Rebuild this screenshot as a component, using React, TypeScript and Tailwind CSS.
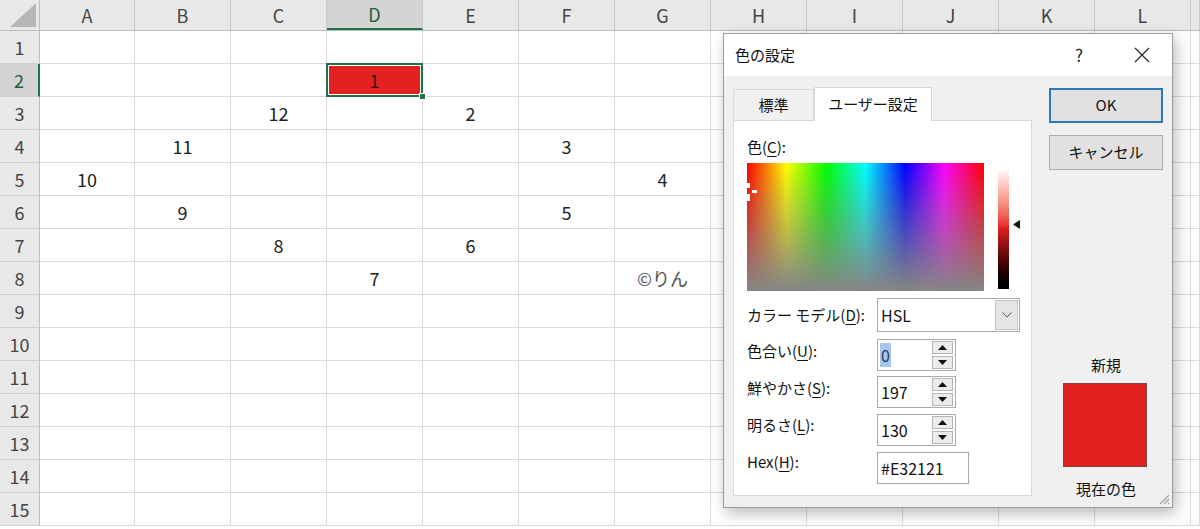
import type { ReactNode } from 'react'

const COLS = ['A', 'B', 'C', 'D', 'E', 'F', 'G', 'H', 'I', 'J', 'K', 'L', 'M']
const ROWS = Array.from({ length: 15 }, (_, i) => i + 1)

const VALUES: Record<string, string> = {
  D2: '1',
  C3: '12',
  E3: '2',
  B4: '11',
  F4: '3',
  A5: '10',
  G5: '4',
  B6: '9',
  F6: '5',
  C7: '8',
  E7: '6',
  D8: '7',
  G8: '©りん',
}

function colWidth(c: string) {
  if (c === 'A') return 'w-[95px] shrink-0'
  if (c === 'M') return 'flex-1'
  return 'w-[96px] shrink-0'
}

function Key({ children }: { children: ReactNode }) {
  return <span className="underline underline-offset-[3px]">{children}</span>
}

function SpinButtons() {
  return (
    <div className="mr-[2px] flex flex-col gap-[2px]">
      <div className="flex h-[13px] w-[21px] items-center justify-center border border-[#b5b5b5] bg-[#ececec]">
        <svg width="9" height="5" viewBox="0 0 9 5">
          <path d="M0 5 L4.5 0 L9 5 Z" fill="#111" />
        </svg>
      </div>
      <div className="flex h-[13px] w-[21px] items-center justify-center border border-[#b5b5b5] bg-[#ececec]">
        <svg width="9" height="5" viewBox="0 0 9 5">
          <path d="M0 0 L4.5 5 L9 0 Z" fill="#111" />
        </svg>
      </div>
    </div>
  )
}

function Spinner({ value, selected }: { value: string; selected?: boolean }) {
  return (
    <div className="flex h-[32px] w-[79px] items-center border border-[#a9a9a9] bg-white">
      <div className="flex-1 pl-[2px] text-[16px]">
        {selected ? (
          <span className="bg-[#a7c8ec] px-px leading-[24px] text-[#1c3d66]">{value}</span>
        ) : (
          <span className="pl-px">{value}</span>
        )}
      </div>
      <SpinButtons />
    </div>
  )
}

function ColorDialog() {
  return (
    <div className="absolute left-[723px] top-[33px] flex h-[475px] w-[450px] flex-col border border-[#9c9c9c] bg-[#f0f0f0] text-[15px] text-[#111] shadow-[3px_5px_14px_rgba(0,0,0,0.28)]">
      {/* title bar */}
      <div className="flex h-[42px] shrink-0 items-center bg-white pl-[11px]">
        <span>色の設定</span>
        <span className="ml-auto mr-[51px] text-[17px] text-[#222]">?</span>
        <svg className="mr-[22px]" width="16" height="16" viewBox="0 0 16 16">
          <path d="M1 1 L15 15 M15 1 L1 15" stroke="#222" strokeWidth="1.1" />
        </svg>
      </div>

      <div className="flex flex-1 px-[9px] pt-[11px]">
        {/* left: tabs + panel */}
        <div className="flex w-[299px] flex-col">
          <div className="flex h-[33px] items-end">
            <div className="flex h-[31px] w-[81px] items-center justify-center border border-b-0 border-[#d9d9d9] bg-[#f0f0f0]">
              標準
            </div>
            <div className="relative z-10 -mb-px flex h-[34px] w-[118px] items-center justify-center border border-b-0 border-[#d9d9d9] bg-white">
              ユーザー設定
            </div>
          </div>
          <div className="h-[376px] border border-[#d9d9d9] bg-white pl-[13px] pt-[16px]">
            <div className="leading-[20px]">
              色(<Key>C</Key>):
            </div>

            <div className="mt-[6px] flex items-start">
              <div className="relative h-[128px] w-[237px] bg-[linear-gradient(to_right,#ff0000,#ffff00,#00ff00,#00ffff,#0000ff,#ff00ff,#ff0000)]">
                <div className="absolute inset-0 bg-linear-to-b from-[#80808000] to-[#858585]" />
                <div className="absolute left-0 top-[20px] h-[5px] w-[3px] bg-white" />
                <div className="absolute left-0 top-[31px] h-[7px] w-[3px] bg-white" />
                <div className="absolute left-[5px] top-[27px] h-[3px] w-[5px] bg-white" />
              </div>
              <div className="ml-[14px] mt-[5px] h-[121px] w-[11px] bg-linear-to-b from-white via-[#e01f1f] to-black" />
              <svg className="ml-[4px] mt-[57px]" width="7" height="9" viewBox="0 0 7 9">
                <path d="M7 0 L0 4.5 L7 9 Z" fill="#111" />
              </svg>
            </div>

            <div className="mt-[7px] flex h-[34px] items-center">
              <div className="w-[130px]">
                カラー モデル(<Key>D</Key>):
              </div>
              <div className="flex h-[34px] w-[143px] items-center border border-[#ababab] bg-white">
                <span className="flex-1 pl-[3px] text-[16px]">HSL</span>
                <div className="mr-px flex h-[30px] w-[23px] items-center justify-center border border-[#c2c2c2] bg-[#e5e5e5]">
                  <svg width="10" height="6" viewBox="0 0 10 6">
                    <path d="M0.5 0.5 L5 5 L9.5 0.5" fill="none" stroke="#555" strokeWidth="1" />
                  </svg>
                </div>
              </div>
            </div>

            <div className="mt-[7px] flex items-start">
              <div className="w-[130px] pt-[2px] leading-[20px]">
                色合い(<Key>U</Key>):
              </div>
              <Spinner value="0" selected />
            </div>
            <div className="mt-[5px] flex items-start">
              <div className="w-[130px] pt-[2px] leading-[20px]">
                鮮やかさ(<Key>S</Key>):
              </div>
              <Spinner value="197" />
            </div>
            <div className="mt-[6px] flex items-start">
              <div className="w-[130px] pt-px leading-[20px]">
                明るさ(<Key>L</Key>):
              </div>
              <Spinner value="130" />
            </div>
            <div className="mt-[6px] flex items-start">
              <div className="w-[130px] leading-[20px]">
                Hex(<Key>H</Key>):
              </div>
              <div className="flex h-[32px] w-[92px] items-center border border-[#a9a9a9] bg-white pl-[3px] text-[16px]">
                #E32121
              </div>
            </div>
          </div>
        </div>

        {/* right: buttons + preview */}
        <div className="ml-[17px] flex w-[114px] flex-col">
          <button className="mt-px flex h-[35px] w-full items-center justify-center border-2 border-[#2f79b5] bg-[#e1e1e1]">
            OK
          </button>
          <button className="mt-[12px] flex h-[35px] w-full items-center justify-center border border-[#adadad] bg-[#e1e1e1]">
            キャンセル
          </button>
          <div className="mt-[185px] text-center leading-[20px]">新規</div>
          <div className="ml-[14px] mt-[8px] h-[84px] w-[84px] border border-[#7c4545] bg-[#e32121]" />
          <div className="mt-[12px] text-center leading-[20px]">現在の色</div>
        </div>
      </div>

      {/* resize grip */}
      <svg className="absolute bottom-[2px] right-[2px]" width="11" height="11" viewBox="0 0 11 11">
        <path d="M10 1 L1 10 M10 5 L5 10 M10 9 L9 10" stroke="#a0a0a0" strokeWidth="1.2" />
      </svg>
    </div>
  )
}

function Cell({ col, row }: { col: string; row: number }) {
  const key = `${col}${row}`
  const value = VALUES[key]
  const selected = key === 'D2'
  return (
    <div
      className={`${colWidth(col)} relative flex items-center justify-center border-b border-r border-[#dadada] ${
        key === 'G8' ? 'text-[#555]' : 'text-[#222]'
      }`}
    >
      {selected && (
        <>
          <div className="absolute inset-[2px] bg-[#e32121]" />
          <div className="absolute -inset-px z-10 border-2 border-[#217346]" />
          <div className="absolute -bottom-[4px] -right-[4px] z-20 h-[7px] w-[7px] border border-white bg-[#217346]" />
        </>
      )}
      <span className={`relative ${selected ? 'text-[#3b0a0a]' : ''}`}>{value}</span>
    </div>
  )
}

export default function App() {
  return (
    <div
      className="relative h-[529px] w-full overflow-hidden bg-white"
      style={{ fontFamily: '"Noto Sans CJK JP", "Noto Sans", sans-serif' }}
    >
      <div className="text-[18px]">
        {/* column headers */}
        <div className="flex h-[31px] border-b border-[#bdbdbd] bg-[#e8e8e8]">
          <div className="relative w-[40px] shrink-0 border-r border-[#bdbdbd]">
            <svg className="absolute bottom-[3px] right-[3px]" width="26" height="24" viewBox="0 0 26 24">
              <path d="M26 0 L26 24 L0 24 Z" fill="#b7b7b7" />
            </svg>
          </div>
          {COLS.map((c) => (
            <div
              key={c}
              className={`${colWidth(c)} flex items-center justify-center border-r border-[#c8c8c8] ${
                c === 'D' ? 'border-b-2 border-b-[#217346] bg-[#d3d3d3] text-[#1f5c3b]' : 'text-[#444]'
              }`}
            >
              {c === 'M' ? '' : c}
            </div>
          ))}
        </div>

        {/* rows */}
        {ROWS.map((r) => (
          <div key={r} className="flex h-[33px]">
            <div
              className={`flex w-[40px] shrink-0 items-center justify-center border-b border-b-[#cfcfcf] ${
                r === 2
                  ? 'border-r-2 border-r-[#217346] bg-[#d3d3d3] text-[#1f5c3b]'
                  : 'border-r border-r-[#bdbdbd] bg-[#e8e8e8] text-[#444]'
              }`}
            >
              {r}
            </div>
            {COLS.map((c) => (
              <Cell key={c} col={c} row={r} />
            ))}
          </div>
        ))}
      </div>

      <ColorDialog />
    </div>
  )
}
